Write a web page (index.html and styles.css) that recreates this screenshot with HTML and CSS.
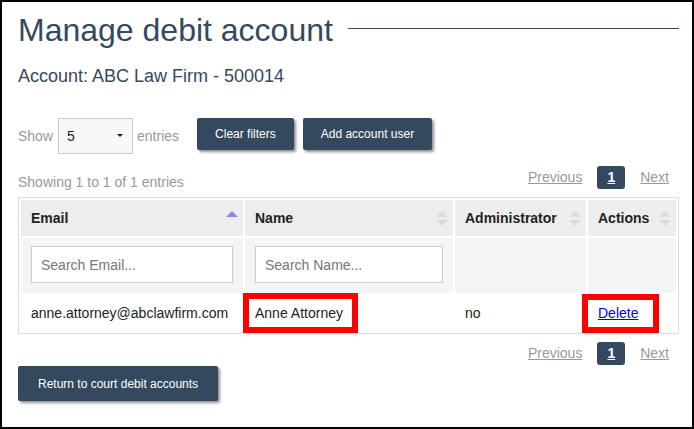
FILE: index.html
```html
<!DOCTYPE html>
<html lang="en">
<head>
  <meta charset="UTF-8" />
  <meta name="viewport" content="width=device-width, initial-scale=1.0" />
  <title>Manage debit account</title>
  <link rel="stylesheet" href="styles.css">
</head>
<body>
  <div class="page">
    <div class="title">
      <h1>Manage debit account</h1>
    </div>
    <h2>Account: ABC Law Firm - 500014</h2>

    <div class="toolbar">
      <label class="length">
        Show
        <span class="select-wrap">
          <select>
            <option>5</option>
            <option>10</option>
            <option>25</option>
          </select>
        </span>
        entries
      </label>
      <button class="btn btn-first">Clear filters</button>
      <button class="btn">Add account user</button>
    </div>

    <div class="info-row">
      <div class="info">Showing 1 to 1 of 1 entries</div>
      <div class="paging">
        <a href="#" class="page-link">Previous</a>
        <a href="#" class="page-link current">1</a>
        <a href="#" class="page-link">Next</a>
      </div>
    </div>

    <table class="users">
      <thead>
        <tr>
          <th class="col-email">
            <div class="th-wrap">Email
              <svg class="sort" width="12" height="15" viewBox="0 0 12 15"><polygon points="0,6 6,0 12,6" fill="#8a8ae0"/></svg>
            </div>
          </th>
          <th class="col-name">
            <div class="th-wrap">Name
              <svg class="sort" width="12" height="15" viewBox="0 0 12 15"><polygon points="0,6 6,0 12,6" /><polygon points="0,9 6,15 12,9" /></svg>
            </div>
          </th>
          <th class="col-admin">
            <div class="th-wrap">Administrator
              <svg class="sort" width="12" height="15" viewBox="0 0 12 15"><polygon points="0,6 6,0 12,6" /><polygon points="0,9 6,15 12,9" /></svg>
            </div>
          </th>
          <th class="col-actions">
            <div class="th-wrap">Actions
              <svg class="sort" width="12" height="15" viewBox="0 0 12 15"><polygon points="0,6 6,0 12,6" /><polygon points="0,9 6,15 12,9" /></svg>
            </div>
          </th>
        </tr>
        <tr class="filters">
          <td><input type="text" placeholder="Search Email..."></td>
          <td><input type="text" placeholder="Search Name..."></td>
          <td></td>
          <td></td>
        </tr>
      </thead>
      <tbody>
        <tr>
          <td>anne.attorney@abclawfirm.com</td>
          <td class="marked">Anne Attorney<span class="mark mark-name"></span></td>
          <td>no</td>
          <td class="marked"><a href="#" class="delete">Delete</a><span class="mark mark-delete"></span></td>
        </tr>
      </tbody>
    </table>

    <div class="paging paging-bottom">
      <a href="#" class="page-link">Previous</a>
      <a href="#" class="page-link current">1</a>
      <a href="#" class="page-link">Next</a>
    </div>

    <button class="btn btn-return">Return to court debit accounts</button>
  </div>
</body>
</html>
```

FILE: styles.css
```css
body {
  margin: 0;
  font-family: "Liberation Sans", Arial, sans-serif;
  color: #222;
}

.page {
  width: 694px;
  height: 429px;
  box-sizing: border-box;
  border: 2px solid #000;
  padding: 10px 13px 0 16px;
}

.title {
  display: flex;
  align-items: center;
  gap: 15px;
}

.title::after {
  content: "";
  flex: 1;
  border-top: 1px solid #34495e;
  margin-bottom: 5px;
}

h1 {
  margin: 0;
  font-size: 32px;
  line-height: 37px;
  font-weight: normal;
  color: #34495e;
}

h2 {
  margin: 17px 0 0;
  font-size: 18px;
  line-height: 21px;
  font-weight: normal;
  color: #34495e;
}

.toolbar {
  display: flex;
  align-items: flex-start;
  margin-top: 31px;
}

.length {
  display: flex;
  align-items: center;
  gap: 5px;
  height: 36px;
  font-size: 14px;
  color: #999;
}

.select-wrap {
  position: relative;
  display: block;
  margin-right: -1px;
}

.select-wrap::after {
  content: "";
  position: absolute;
  right: 10px;
  top: 16px;
  border-left: 3px solid transparent;
  border-right: 3px solid transparent;
  border-top: 3px solid #222;
  pointer-events: none;
}

.select-wrap select {
  appearance: none;
  -webkit-appearance: none;
  display: block;
  width: 75px;
  height: 36px;
  padding: 0 8px;
  border: 1px solid #ccc;
  border-radius: 0;
  background: #f8f8f8;
  font-family: inherit;
  font-size: 14px;
  color: #222;
  outline: none;
}

.btn {
  height: 32px;
  padding: 0 18px;
  border: 0;
  border-radius: 2px;
  background-color: #34495e;
  color: #fff;
  font-family: inherit;
  font-size: 12px;
  box-shadow: 2px 2px 3px rgba(0, 0, 0, 0.45);
  cursor: pointer;
}

.btn + .btn {
  margin-left: 9px;
}

.btn-first {
  margin-left: 18px;
}

.info-row {
  display: flex;
  justify-content: space-between;
  align-items: flex-start;
  margin-top: 12px;
}

.info {
  padding-top: 6px;
  font-size: 14px;
  line-height: 20px;
  color: #999;
}

.paging {
  display: flex;
  gap: 5px;
}

.paging-bottom {
  justify-content: flex-end;
  margin-top: 8px;
}

.page-link {
  padding: 3px 10px;
  font-size: 14px;
  line-height: 17px;
  color: #999;
}

.page-link.current {
  background-color: #34495e;
  border-radius: 3px;
  color: #fff;
  font-weight: bold;
}

.users {
  width: 100%;
  margin-top: 5px;
  table-layout: fixed;
  border: 1px solid #ddd;
  border-collapse: separate;
  border-spacing: 2px;
  font-size: 14px;
}

.users th {
  box-sizing: border-box;
  padding: 8px 5px 8px 10px;
  background-color: #ededed;
  line-height: 20px;
  text-align: left;
  color: #222;
}

.col-email { width: 222px; }
.col-name { width: 208px; }
.col-admin { width: 131px; }
.col-actions { width: 88px; }

.th-wrap {
  display: flex;
  justify-content: space-between;
  align-items: center;
}

.sort {
  fill: #dcdcdc;
  flex-shrink: 0;
}

.filters td {
  padding: 8px 10px 10px;
  background-color: #f5f5f5;
}

.filters input {
  display: block;
  width: 100%;
  height: 37px;
  box-sizing: border-box;
  padding: 0 9px;
  border: 1px solid #ccc;
  background: #fff;
  font-family: inherit;
  font-size: 14px;
  color: #222;
}

.filters input::placeholder {
  color: #777;
}

.users tbody td {
  padding: 8px 10px;
  line-height: 20px;
  color: #222;
  white-space: nowrap;
}

.users td.marked {
  position: relative;
}

.delete {
  color: #0000ee;
}

/* red highlight boxes drawn over the row */
.mark {
  position: absolute;
  box-sizing: border-box;
  border: 6px solid #f00;
  pointer-events: none;
}

.mark-name {
  left: -2px;
  top: -2px;
  bottom: -2px;
  width: 115px;
}

.mark-delete {
  left: -6px;
  top: -1px;
  bottom: -2px;
  width: 77px;
}

.btn-return {
  display: block;
  height: 35px;
  margin-top: 1px;
  padding: 0 20px;
}
```
